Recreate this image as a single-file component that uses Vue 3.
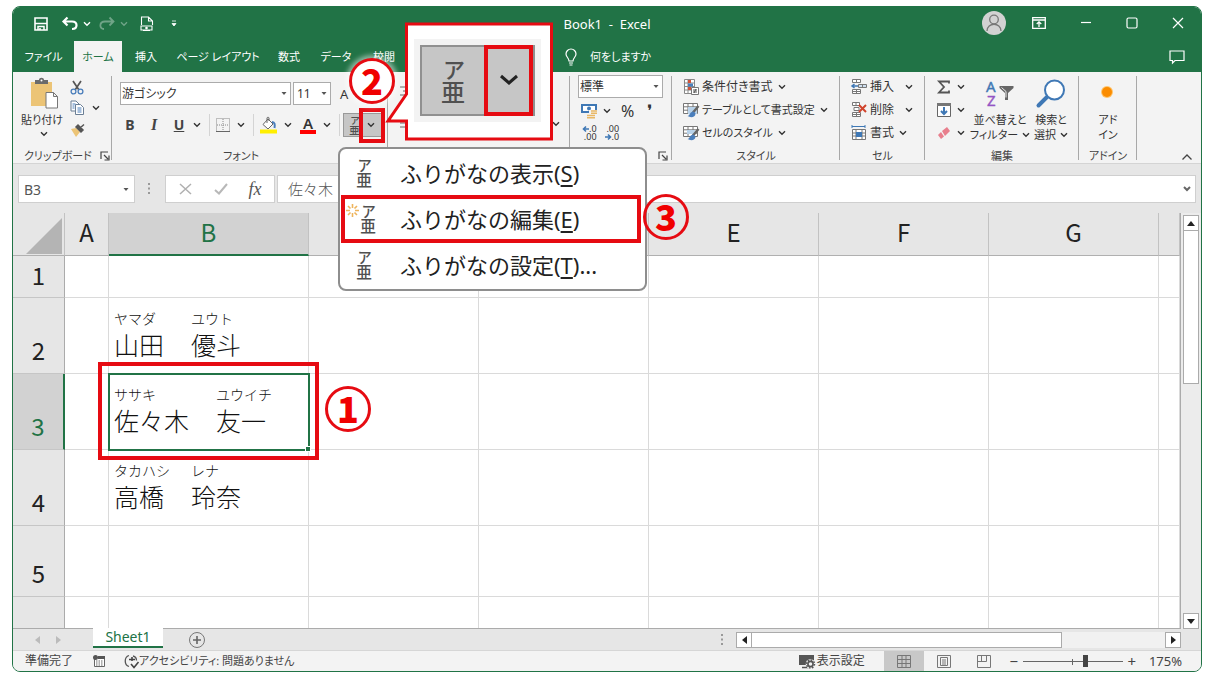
<script setup>
import { h, ref } from 'vue'

const tabs = ['ファイル', 'ホーム', '挿入', 'ページ レイアウト', '数式', 'データ', '校閲']
const columns = ['A', 'B', 'C', 'D', 'E', 'F', 'G', '']
const rows = [
  { n: '1' },
  { n: '2', name: [['ヤマダ', '山田'], ['ユウト', '優斗']] },
  { n: '3', name: [['ササキ', '佐々木'], ['ユウイチ', '友一']] },
  { n: '4', name: [['タカハシ', '高橋'], ['レナ', '玲奈']] },
  { n: '5' },
  { n: '' },
]
const menu = [
  { text: 'ふりがなの表示', key: 'S', tail: '' },
  { text: 'ふりがなの編集', key: 'E', tail: '', spark: true },
  { text: 'ふりがなの設定', key: 'T', tail: '...' },
]
const fontName = ref('游ゴシック')
const fontSize = ref('11')
const format = ref('標準')
const cellRef = ref('B3')
const formula = ref('佐々木　友一')
const zoom = ref(63)

// Phonetic guide icon: a small reading above its base character
const glyph = { 'text-anchor': 'middle', fill: '#505050', 'font-family': "'Noto Sans CJK JP', sans-serif" }
const Furi = (props) =>
  h('svg', { viewBox: '0 0 24 46', 'aria-hidden': 'true', ...props }, [
    h('text', { ...glyph, x: 13, y: 20, 'font-size': 22, 'font-weight': 500 }, 'ア'),
    h('text', { ...glyph, x: 12, y: 43, 'font-size': 24, 'font-weight': 500 }, '亜'),
  ])
</script>

<template>
  <div class="page">
    <svg class="defs" aria-hidden="true">
      <symbol id="chev" viewBox="0 0 8 6"><path d="M1 1.3 4 4.3 7 1.3" fill="none" stroke="currentColor" stroke-width="1.4" /></symbol>
      <symbol id="tri" viewBox="0 0 8 6"><path d="M1.500 1h5L4 4z" fill="#555" /></symbol>
      <symbol id="launch" viewBox="0 0 10 10"><path d="M1 8V1h7M4 4l4 4M9 4.5V9H4.5" fill="none" stroke="currentColor" stroke-width="1.2" /></symbol>
      <symbol id="grid" viewBox="0 0 16 16"><path d="M.5 1.5h14v10H.5zM.5 4.8h14M.5 8.2h14M5 1.5v10M10 1.5v10" fill="#fff" stroke="#777" /></symbol>
    </svg>

    <div class="window">
      <header class="title-bar">
        <div class="quick">
          <button class="q-save" aria-label="上書き保存"><svg width="14" height="14" viewBox="0 0 14 14"><path d="M1 1h12v12H1z" fill="none" stroke="#fff" stroke-width="1.6" /><path d="M1 6.5h12M4 13V9.5h6V13M6 11v2" fill="none" stroke="#fff" stroke-width="1.5" /></svg></button>
          <button class="q-undo" aria-label="元に戻す"><svg width="16" height="14" viewBox="0 0 16 14"><path d="M5.500 .5 1.500 4.500l4 4M2 4.500h8c6 0 6 7.500 0 7.500" fill="none" stroke="#fff" stroke-width="2.200" /></svg></button>
          <button class="q-chev" aria-label="元に戻す一覧"><svg width="8" height="6"><use href="#chev" /></svg></button>
          <button class="q-redo faded" aria-label="やり直し"><svg width="16" height="14" viewBox="0 0 16 14"><path d="m10.500 .5 4 4-4 4M14 4.500H6C0 4.500 0 12 5 12" fill="none" stroke="#fff" stroke-width="1.800" /></svg></button>
          <button class="q-chev faded" aria-label="やり直し一覧"><svg width="8" height="6"><use href="#chev" /></svg></button>
          <button class="q-doc" aria-label="印刷プレビュー"><svg width="14" height="16" viewBox="0 0 14 16"><path d="M1.500 9V1h7l4 4v4M8.500 1v4h4M1 10h11v4H1zM3 14.500h7" fill="none" stroke="#fff" stroke-width="1.100" /><circle cx="6.500" cy="12" r="1.300" fill="#fff" /></svg></button>
          <button class="q-more" aria-label="カスタマイズ"><svg width="8" height="8" viewBox="0 0 8 8"><path d="M2 1h4M2 3.500h4L4 6z" fill="#fff" stroke="#fff" stroke-width=".8" /></svg></button>
        </div>
        <div class="doc-title">Book1&nbsp; -&nbsp; Excel</div>
        <div class="win-controls">
          <button class="avatar" aria-label="アカウント"><svg width="16" height="18" viewBox="0 0 16 18"><circle cx="8" cy="5.500" r="4.300" fill="none" stroke="#777" stroke-width="1.300" /><path d="M1 17c0-9 14-9 14 0" fill="none" stroke="#777" stroke-width="1.300" /></svg></button>
          <button aria-label="リボンの表示"><svg width="14" height="12" viewBox="0 0 14 12"><path d="M.7.7h12.600v10.600H.7zM.7 3h12.600M7 10V5M4.700 7 7 4.800 9.300 7" fill="none" stroke="#fff" stroke-width="1.300" /></svg></button>
          <button aria-label="最小化"><svg width="12" height="12" viewBox="0 0 12 12"><path d="M1 5.500h10" stroke="#fff" stroke-width="1.200" /></svg></button>
          <button aria-label="最大化"><svg width="12" height="12" viewBox="0 0 12 12"><rect x="1" y="1" width="10" height="10" rx="1.500" fill="none" stroke="#fff" stroke-width="1.200" /></svg></button>
          <button aria-label="閉じる"><svg width="12" height="12" viewBox="0 0 12 12"><path d="m1 1 10 10M11 1 1 11" stroke="#fff" stroke-width="1.200" /></svg></button>
        </div>
      </header>

      <nav class="tabs">
        <button v-for="t in tabs" :key="t" class="tab" :class="{ active: t === 'ホーム' }">{{ t }}</button>
        <button class="tell"><svg width="12" height="18" viewBox="0 0 12 18"><path d="M4 13c0-3-3-4-3-7a5 5 0 0 1 10 0c0 3-3 4-3 7zM4 15h4M4.500 17h3" fill="none" stroke="#fff" stroke-width="1.200" /></svg>何をしますか</button>
        <button class="comment" aria-label="コメント"><svg width="16" height="14" viewBox="0 0 16 14"><path d="M1 1h14v9.500H6L3.500 13v-2.500H1z" fill="none" stroke="#fff" stroke-width="1.200" /></svg></button>
      </nav>

      <section class="ribbon">
        <div class="group g-clip">
          <div class="body clip">
            <button class="big paste">
              <svg class="board" width="30" height="32" viewBox="0 0 30 32"><path d="M1 4h21v24H1z" fill="#ecc476" /><path d="M5 2h4c0-3 5-3 5 0h4v4H5z" fill="#6b6b6b" /><circle cx="11.500" cy="2.500" r="1" fill="#fff" /><path d="M16 14.500h7.500l4 4V30H16zM23.500 14.500v4h4" fill="#fff" stroke="#777" /></svg>
              <span class="kana">貼り付け</span>
              <svg class="paste-more" width="8" height="6"><use href="#chev" /></svg>
            </button>
            <div class="clip-side">
              <button aria-label="切り取り"><svg width="14" height="15" viewBox="0 0 14 15"><path d="m3 1 6 9M11 1l-6 9" stroke="#555" stroke-width="1.700" /><circle cx="3.500" cy="11.500" r="2.400" fill="none" stroke="#4a7ebb" stroke-width="1.300" /><circle cx="10.500" cy="11.500" r="2.400" fill="none" stroke="#4a7ebb" stroke-width="1.300" /></svg></button>
              <button aria-label="コピー"><svg width="15" height="15" viewBox="0 0 15 15"><path d="M1 1h5l3 3v7H1z" fill="#fff" stroke="#6b7f95" /><path d="M5.500 4.500h5l3 3v7h-8z" fill="#fff" stroke="#6b7f95" /><path d="M2.500 4h3M2.500 6h2M2.500 8h2M7.500 8h4M7.500 10h4M7.500 12h4" stroke="#4a7ebb" /></svg><svg class="gap7" width="8" height="6"><use href="#chev" /></svg></button>
              <button aria-label="書式のコピー"><svg width="15" height="13" viewBox="0 0 15 13"><path d="M1 5l5-1 4 4-4 5z" fill="#ecc476" /><path d="m6 3 5 5 2-2-5-5zM10 4l4-3.500" fill="#555" stroke="#555" stroke-width="1.500" /></svg></button>
            </div>
          </div>
          <div class="label"><span>クリップボード</span><svg width="10" height="10"><use href="#launch" /></svg></div>
        </div>

        <div class="group g-font">
          <div class="body font-body">
            <div class="row combos">
              <div class="combo font-name"><input v-model="fontName" aria-label="フォント"><button aria-label="フォント一覧"><svg width="8" height="6"><use href="#tri" /></svg></button></div>
              <div class="combo font-size"><input v-model="fontSize" aria-label="フォント サイズ"><button aria-label="サイズ一覧"><svg width="8" height="6"><use href="#tri" /></svg></button></div>
              <button class="grow-font" aria-label="フォント サイズの拡大">A</button>
              <button class="grow-font" aria-label="フォント サイズの縮小">A</button>
            </div>
            <div class="row styles-row">
              <button class="glyph b">B</button>
              <button class="glyph i">I</button>
              <button class="glyph u">U</button>
              <button aria-label="下線の種類" class="c1"><svg width="8" height="6"><use href="#chev" /></svg></button>
              <i class="vsep"></i>
              <button aria-label="罫線" class="c2"><svg width="14" height="14" viewBox="0 0 14 14"><path d="M.5.500h13v13H.5zM7 1v12M1 7h12" fill="none" stroke="#888" stroke-dasharray="1 1" /><path d="M0 13.500h14" stroke="#666" /></svg><svg width="8" height="6"><use href="#chev" /></svg></button>
              <i class="vsep"></i>
              <button aria-label="塗りつぶし" class="c2"><svg width="17" height="17" viewBox="0 0 17 17"><path d="m8 2 5 5-5 5-5-4.500z" fill="#fff" stroke="#666" /><path d="M7 6V1c0-1 2-1 2 0v3" fill="none" stroke="#666" /><path d="M12 5c3 0 3 3 2.500 6" fill="none" stroke="#4a7ebb" stroke-width="2" /><path d="M0 12.500h17v4H0z" fill="#ffef00" /></svg><svg width="8" height="6"><use href="#chev" /></svg></button>
              <button aria-label="フォントの色" class="c2"><span class="fontcolor">A</span><svg width="8" height="6"><use href="#chev" /></svg></button>
              <i class="vsep"></i>
              <button aria-label="ふりがな" class="furi-btn"><Furi width="11" height="20" /><svg width="8" height="6"><use href="#chev" /></svg></button>
            </div>
          </div>
          <div class="label"><span>フォント</span></div>
        </div>

        <div class="group g-align">
          <div class="body align-body">
            <button aria-label="上揃え"><svg width="14" height="12" viewBox="0 0 14 12"><path d="M0 1h14M3 5h8M0 9h14" stroke="#666" /></svg></button>
            <div class="row align-low"><button aria-label="左揃え"><svg width="14" height="12" viewBox="0 0 14 12"><path d="M0 1h14M0 5h9M0 9h14" stroke="#666" /></svg></button><button aria-label="結合"><svg width="8" height="6"><use href="#chev" /></svg></button></div>
          </div>
        </div>

        <div class="group g-num">
          <div class="body num-body">
            <div class="combo"><input v-model="format" aria-label="表示形式"><button aria-label="表示形式一覧"><svg width="8" height="6"><use href="#tri" /></svg></button></div>
            <div class="row num-row">
              <button aria-label="通貨" class="money"><svg width="17" height="15" viewBox="0 0 17 15"><path d="M1 1h14v7H1z" fill="#fff" stroke="#3f78b5" stroke-width="2" /><circle cx="8" cy="4.500" r="2" fill="#3f78b5" /><path d="M8 6h9v9H5v-4h3z" fill="#f3f3f3" /><path d="M10 7h6M10 9.200h6M6 11.500h8M6 13.800h8" stroke="#e9b865" stroke-width="1.600" /></svg><svg width="8" height="6"><use href="#chev" /></svg></button>
              <button class="pct">%</button>
              <button class="comma" aria-label="桁区切り">❜</button>
            </div>
            <div class="row dec-row">
              <button class="dec" aria-label="小数点以下の表示桁数を増やす"><span><svg width="7" height="6" viewBox="0 0 7 6"><path d="M7 3H2M4 .5 1.500 3 4 5.500" fill="none" stroke="#3f78b5" stroke-width="1.600" /></svg>.0</span><span>.00</span></button>
              <button class="dec" aria-label="小数点以下の表示桁数を減らす"><span>.00</span><span><svg width="7" height="6" viewBox="0 0 7 6"><path d="M0 3h5M3 .5 5.500 3 3 5.500" fill="none" stroke="#3f78b5" stroke-width="1.600" /></svg>.0</span></button>
            </div>
          </div>
          <div class="label end"><svg width="10" height="10"><use href="#launch" /></svg></div>
        </div>

        <div class="group g-style">
          <div class="body list">
            <button><svg width="16" height="16" viewBox="0 0 16 16"><path d="M1.500.500h10v14h-10zM1.500 4h10M1.500 7.500h10M1.500 11h10M5 .5v14" fill="#fff" stroke="#888" /><path d="M5 1h3v3H5zM5 8h3v3H5z" fill="#d0533a" /><path d="M5 4.500h5v3H5z" fill="#4a7ebb" /><path d="M8.500 8.500h7v7h-7z" fill="#fff" stroke="#777" /><path d="M10 11h4M10 13h4M13 10l-2 4" stroke="#555" /></svg><span>条件付き書式</span><svg width="8" height="6"><use href="#chev" /></svg></button>
            <button><svg width="16" height="16" viewBox="0 0 16 16"><use href="#grid" width="16" height="16" /><path d="M5 5h9v7H5z" fill="#b9d3ea" /><path d="M15.500 4 10 10.500" stroke="#666" stroke-width="2.400" /><path d="M10.500 9.500c-4 0-3 4-6 4.500 3 2 8 1.500 8-2.500z" fill="#4a7ebb" /></svg><span class="kana">テーブルとして書式設定</span><svg width="8" height="6"><use href="#chev" /></svg></button>
            <button><svg width="16" height="16" viewBox="0 0 16 16"><use href="#grid" width="16" height="16" /><path d="M4 5h8v4H4z" fill="#b9d3ea" /><path d="M15.500 4 10 10.500" stroke="#666" stroke-width="2.400" /><path d="M10.500 9.500c-4 0-3 4-6 4.500 3 2 8 1.500 8-2.500z" fill="#4a7ebb" /></svg><span class="kana">セルのスタイル</span><svg width="8" height="6"><use href="#chev" /></svg></button>
          </div>
          <div class="label"><span>スタイル</span></div>
        </div>

        <div class="group g-cell">
          <div class="body list cells">
            <button class="wide"><svg width="16" height="16" viewBox="0 0 16 16"><path d="M1.500.500h8v3h-8zM5.500.500v3M1.500 10.500h8v4h-8zM5.500 10.500v4M1.500 12.500h8" fill="#fff" stroke="#777" /><path d="M7.500 5.500h8v3h-8zM11.500 5.500v3" fill="#cfe0f0" stroke="#777" /><path d="M7 7H1m2.500-2L1 7l2.500 2" fill="none" stroke="#3f78b5" stroke-width="1.500" /></svg><span>挿入</span><svg width="8" height="6"><use href="#chev" /></svg></button>
            <button class="wide"><svg width="16" height="16" viewBox="0 0 16 16"><path d="M1.500.500h7v3h-7zM5 .5v3M1.500 10.500h8v4h-8zM5.500 10.500v4M1.500 12.500h8M3 5.500h5v3H3z" fill="#fff" stroke="#777" /><path d="m8 3 7 7M15 3l-7 7" stroke="#d0442c" stroke-width="2" /></svg><span>削除</span><svg width="8" height="6"><use href="#chev" /></svg></button>
            <button><svg width="16" height="16" viewBox="0 0 16 16"><path d="M1 1.500h13M1 0v3M14 0v3" stroke="#3f78b5" /><path d="M1.500 4.500h13v10h-13zM1.500 8h13M1.500 11h13M5 4.500v10M11 4.500v10" fill="#fff" stroke="#777" /><path d="M5 7h6v5H5z" fill="#3f78b5" /></svg><span>書式</span><svg width="8" height="6"><use href="#chev" /></svg></button>
          </div>
          <div class="label"><span>セル</span></div>
        </div>

        <div class="group g-edit">
          <div class="body edit-body">
            <div class="list edit-list">
              <button aria-label="合計"><svg width="14" height="14" viewBox="0 0 14 14"><path d="M12 3.500V1.500H2l5 5.500-5 5.500h10v-2" fill="none" stroke="#555" stroke-width="1.800" /></svg><svg width="8" height="6"><use href="#chev" /></svg></button>
              <button aria-label="フィル"><svg width="14" height="14" viewBox="0 0 14 14"><path d="M.5.500h13v13H.5z" fill="#fff" stroke="#666" /><path d="M0 1.500h14" stroke="#777" stroke-width="3" /><path d="M7 4v7M4 8l3 3 3-3" fill="none" stroke="#3f78b5" stroke-width="2" /></svg><svg width="8" height="6"><use href="#chev" /></svg></button>
              <button aria-label="クリア"><svg width="14" height="14" viewBox="0 0 14 14"><path d="m5 5 5-4 3 4-5 5z" fill="#e87f8d" /><path d="m4 6-3 3 3 4 3-2.500z" fill="#e87f8d" /></svg><svg width="8" height="6"><use href="#chev" /></svg></button>
            </div>
            <button class="big sort">
              <svg width="30" height="30" viewBox="0 0 30 30"><text x="1" y="13" font-size="15" fill="#3f78b5" stroke="#3f78b5" stroke-width=".4" font-family="'Noto Sans', sans-serif">A</text><text x="2" y="27" font-size="15" fill="#9455c4" stroke="#9455c4" stroke-width=".4" font-family="'Noto Sans', sans-serif">Z</text><path d="M14.500 7h14v2L23 14v7h-3v-7l-5.500-5z" fill="#666" /><path d="m16.500 8.500 4.500 4v6" fill="none" stroke="#eee" /></svg>
              <span>並べ替えと</span><span>フィルター <svg width="8" height="6"><use href="#chev" /></svg></span>
            </button>
            <button class="big find">
              <svg width="30" height="30" viewBox="0 0 30 30"><path d="m11 18-8.500 8.500" stroke="#3f78b5" stroke-width="4" stroke-linecap="round" /><circle cx="18.500" cy="11" r="9.500" fill="#fff" stroke="#3f78b5" stroke-width="2" /></svg>
              <span>検索と</span><span>選択 <svg width="8" height="6"><use href="#chev" /></svg></span>
            </button>
          </div>
          <div class="label"><span>編集</span></div>
        </div>

        <div class="group g-add">
          <div class="body">
            <button class="big add">
              <svg width="30" height="30" viewBox="0 0 30 30"><circle cx="14" cy="13" r="6" fill="#ffc46b" /><circle cx="14" cy="13" r="5" fill="#fb8c00" /></svg>
              <span>アド</span><span>イン</span>
            </button>
          </div>
          <div class="label"><span>アドイン</span></div>
        </div>
        <button class="collapse" aria-label="リボンを折りたたむ"><svg width="12" height="8" viewBox="0 0 12 8"><path d="m1.500 6.500 4.500-4.500 4.500 4.500" fill="none" stroke="#444" stroke-width="1.300" /></svg></button>
      </section>

      <section class="formula-bar">
        <div class="combo name-box"><input v-model="cellRef" aria-label="名前ボックス"><button aria-label="名前一覧"><svg width="8" height="6"><use href="#tri" /></svg></button></div>
        <svg class="dots" width="3" height="12" viewBox="0 0 3 12"><path d="M0 0h2v2H0zM0 4.500h2v2H0zM0 9h2v2H0z" fill="#999" /></svg>
        <div class="fx-box">
          <button aria-label="キャンセル"><svg width="14" height="12" viewBox="0 0 14 12"><path d="m1 1 11 10M12 1 1 11" stroke="#b0b0b0" stroke-width="1.500" /></svg></button>
          <button aria-label="入力"><svg width="14" height="12" viewBox="0 0 14 12"><path d="m1 7 4 3.500L13 1" fill="none" stroke="#b8b8b8" stroke-width="2" /></svg></button>
          <button class="fx"><i>fx</i></button>
        </div>
        <div class="formula"><input v-model="formula" aria-label="数式バー"><button aria-label="数式バーの展開"><svg width="8" height="6" viewBox="0 0 8 6"><path d="m1 1 3 3 3-3" fill="none" stroke="#666" stroke-width="2" /></svg></button></div>
      </section>

      <main class="sheet">
        <div class="table-wrap">
          <table>
            <colgroup><col class="w-head"><col class="w-a"><col class="w-b"><col v-for="k in 5" :key="k" class="w-c"><col></colgroup>
            <thead>
              <tr>
                <th class="corner"><svg width="36" height="36" viewBox="0 0 36 36"><path d="M36 0v36H0z" fill="#b4b4b4" /></svg></th>
                <th v-for="c in columns" :key="c" :class="{ sel: c === 'B' }">{{ c }}</th>
              </tr>
            </thead>
            <tbody>
              <tr v-for="r in rows" :key="r.n" :class="'r' + r.n">
                <th :class="{ sel: r.n === '3' }">{{ r.n }}</th>
                <td v-for="c in columns" :key="c" :class="{ current: r.n === '3' && c === 'B' }">
                  <div v-if="c === 'B' && r.name" class="name">
                    <span v-for="p in r.name" :key="p[1]" class="part"><small>{{ p[0] }}</small><span>{{ p[1] }}</span></span>
                  </div>
                  <i v-if="r.n === '3' && c === 'B'" class="handle"></i>
                </td>
              </tr>
            </tbody>
          </table>
        </div>
        <div class="vscroll">
          <button aria-label="上へ"><svg width="8" height="5" viewBox="0 0 8 5"><path d="M4 0l4 5H0z" fill="#222" /></svg></button>
          <div class="vthumb"></div>
          <button class="down" aria-label="下へ"><svg width="8" height="5" viewBox="0 0 8 5"><path d="M4 5l4-5H0z" fill="#222" /></svg></button>
        </div>
      </main>

      <section class="sheet-bar">
        <div class="sheet-nav">
          <button aria-label="前のシート"><svg width="5" height="8" viewBox="0 0 5 8"><path d="M5 0v8L0 4z" fill="#bbb" /></svg></button>
          <button aria-label="次のシート"><svg width="5" height="8" viewBox="0 0 5 8"><path d="M0 0v8l5-4z" fill="#bbb" /></svg></button>
        </div>
        <button class="sheet-tab">Sheet1</button>
        <button class="add-sheet" aria-label="新しいシート"><svg width="18" height="18" viewBox="0 0 18 18"><circle cx="9" cy="9" r="7.500" fill="none" stroke="#777" /><path d="M9 5v8M5 9h8" stroke="#666" stroke-width="1.600" /></svg></button>
        <svg class="bar-dots" width="3" height="12" viewBox="0 0 3 12"><path d="M0 0h2v2H0zM0 4.500h2v2H0zM0 9h2v2H0z" fill="#999" /></svg>
        <div class="hscroll">
          <button aria-label="左へ"><svg width="5" height="8" viewBox="0 0 5 8"><path d="M5 0v8L0 4z" fill="#222" /></svg></button>
          <div class="hthumb"></div>
          <button class="right" aria-label="右へ"><svg width="5" height="8" viewBox="0 0 5 8"><path d="M0 0v8l5-4z" fill="#222" /></svg></button>
        </div>
      </section>

      <footer class="status">
        <span class="ready">準備完了</span>
        <svg class="macro" width="13" height="12" viewBox="0 0 13 12"><path d="M1.500 2.500h10v9h-10z" fill="#fff" stroke="#666" /><path d="M5 2.500h7" stroke="#555" stroke-width="3" /><circle cx="2.500" cy="2.500" r="2.500" fill="#555" /><path d="M3 6h7M3 8h7M3 10h7" stroke="#666" stroke-dasharray="1.500 1" /></svg>
        <svg class="acc" width="15" height="15" viewBox="0 0 15 15"><path d="M5 1.500C0 3 0 11 5 12.500M9 2c2 .5 3.500 2 3.500 4.500" fill="none" stroke="#555" stroke-width="1.300" /><path d="M5 5.500h6M8 3v4M7 10l3 3.500 4.500-5.500" fill="none" stroke="#444" stroke-width="1.600" /></svg>
        <span class="kana">アクセシビリティ: 問題ありません</span>
        <button class="display"><svg width="17" height="15" viewBox="0 0 17 15"><path d="M0 1h15v10H0z" fill="#555" /><path d="M3 13.500h6" stroke="#555" stroke-width="1.500" /><circle cx="11.500" cy="10" r="4.800" fill="#f2f2f2" /><circle cx="11.500" cy="10" r="2.600" fill="none" stroke="#555" stroke-width="1.600" /><circle cx="11.500" cy="10" r="4" fill="none" stroke="#555" stroke-width="1.500" stroke-dasharray="1.600 1.500" /></svg>表示設定</button>
        <button class="view on" aria-label="標準"><svg width="14" height="13" viewBox="0 0 14 13"><path d="M.5.500h13v12H.5zM.5 4.500h13M.5 8.500h13M5 .5v12M9 .5v12" fill="none" stroke="#777" /></svg></button>
        <button class="view" aria-label="ページ レイアウト"><svg width="14" height="13" viewBox="0 0 14 13"><path d="M.5.500h13v12H.5zM3.500 2.500h7v8h-7zM5 5h4M5 7h4M5 9h4" fill="none" stroke="#777" /></svg></button>
        <button class="view" aria-label="改ページ プレビュー"><svg width="14" height="13" viewBox="0 0 14 13"><path d="M.5.500h13v12H.5zM4.500.500v6M9.500.500v6M.5 6.500h9" fill="none" stroke="#777" /></svg></button>
        <div class="zoom">
          <button aria-label="縮小">−</button>
          <input v-model="zoom" type="range" min="0" max="100" aria-label="ズーム">
          <button aria-label="拡大">+</button>
          <span class="pct-text">175%</span>
        </div>
      </footer>

      <div class="mark-small"></div>
      <div class="badge two">2</div>
      <div class="callout">
        <svg class="balloon" width="170" height="121" viewBox="0 0 170 121"><path d="M22.500 2h145v115h-145v-18H4l18.500-27z" fill="#fff" stroke="#e60b12" stroke-width="3" /></svg>
        <div class="zoomed"><Furi width="24" height="46" /><span class="zoomed-arrow"><svg width="20" height="13" viewBox="0 0 20 13"><path d="m2 2 8 7 8-7" fill="none" stroke="#222" stroke-width="3" /></svg></span></div>
      </div>
      <ul class="menu">
        <li v-for="m in menu" :key="m.key">
          <button :class="{ target: m.spark }">
            <span class="ico"><svg v-if="m.spark" class="spark" width="13" height="13" viewBox="0 0 13 13"><path d="M6.500 0v4M6.500 9v4M0 6.500h4M9 6.500h4M2 2l2.500 2.500M11 2 8.500 4.500M2 11l2.500-2.500M11 11 8.500 8.500" stroke="#eeb45c" stroke-width="1.600" /></svg><Furi width="16" height="30" /></span>
            <span>{{ m.text }}(<u>{{ m.key }}</u>){{ m.tail }}</span>
          </button>
        </li>
      </ul>
      <div class="mark-cell"></div>
      <div class="badge one">1</div>
      <div class="badge three">3</div>
    </div>
  </div>
</template>

<style>
body { margin: 0; background: #fff; }
</style>

<style scoped>
* { box-sizing: border-box; }
.page { height: 100vh; padding: 6px 10px 9px 12px; font-family: "Noto Sans", "Noto Sans CJK JP", sans-serif; font-size: 12px; line-height: 16px; color: #333; font-feature-settings: "palt"; }
.defs { position: absolute; width: 0; height: 0; }
svg { display: block; flex: none; overflow: visible; }
button { font: inherit; font-feature-settings: inherit; color: inherit; background: none; border: 0; padding: 0; display: flex; align-items: center; white-space: nowrap; }
input { font: inherit; font-feature-settings: inherit; color: inherit; border: 0; background: none; padding: 0; margin: 0; min-width: 0; outline: 0; }
.kana { font-size: 11px; }
.window { position: relative; height: 100%; display: flex; flex-direction: column; border: 1px solid #217346; border-radius: 8px; background: #e6e6e6; }

.title-bar { background: #217346; color: #fff; height: 34px; flex: none; display: grid; grid-template-columns: 1fr auto 1fr; align-items: center; border-radius: 7px 7px 0 0; }
.quick { display: flex; align-items: center; padding-left: 21px; }
.q-undo { margin-left: 14px; }
.q-chev { margin-left: 5px; }
.q-redo { margin-left: 8px; }
.q-doc { margin-left: 12px; }
.q-more { margin-left: 16px; }
.faded { opacity: .35; }
.doc-title { font-size: 13px; }
.win-controls { display: flex; justify-content: flex-end; align-items: center; gap: 34px; padding: 0 17px 3px 0; }
.avatar { width: 24px; height: 24px; border-radius: 50%; background: #d2d2d2; justify-content: center; margin-right: -8px; }

.tabs { background: #217346; color: #fff; height: 31px; flex: none; display: grid; grid-template-columns: 61px 48px 48px 96px 46px 48px 48px 157px 1fr; }
.tab { justify-content: center; font-size: 11px; }
.tab.active { background: #f3f3f3; color: #217346; }
.tell { grid-column: 9; gap: 13px; justify-self: start; font-size: 11px; }
.comment { grid-column: 10; margin-right: 16px; }

.ribbon { display: flex; height: 92px; flex: none; background: #f3f3f3; border-bottom: 1px solid #d4d4d4; }
.group { display: flex; flex-direction: column; flex: none; position: relative; }
.group::after { content: ""; position: absolute; right: 0; top: 4px; bottom: 3px; width: 1px; background: #a8a8a8; }
.body { flex: 1; min-height: 0; }
.label { height: 16px; display: flex; justify-content: center; align-items: center; font-size: 11px; color: #444; margin-bottom: -1px; }
.label.end { justify-content: flex-end; padding-right: 4px; }
.row { display: flex; align-items: center; }
.g-clip { width: 99px; }
.g-font { width: 276px; }
.g-font .label { padding-right: 18px; }
.g-align { width: 182px; }
.g-num { width: 102px; }
.g-style { width: 168px; }
.g-cell { width: 85px; }
.g-edit { width: 154px; }
.g-add { width: 58px; }
.g-clip .label { justify-content: space-between; padding: 0 2px 0 11px; }

.big { flex-direction: column; line-height: 15px; font-size: 11px; }
.big > span { display: flex; align-items: center; gap: 4px; height: 15px; }
.clip { display: flex; padding-top: 6px; }
.paste { width: 56px; margin-left: 1px; align-self: flex-start; }
.paste > span { height: 18px; }
.board { margin-left: 6px; }
.paste-more { margin: 3px 0 0 4px; }
.clip-side { display: flex; flex-direction: column; }
.clip-side button { height: 23px; }
.clip-side button:first-child { height: 18px; }
.gap7 { margin-left: 7px; }

.combo { display: flex; align-items: center; justify-content: space-between; background: #fff; border: 1px solid #ababab; height: 23px; padding: 0 2px 0 1px; }
.combo input { flex: 1; width: 20px; }
.font-body { padding: 10px 0 0 8px; }
.combos { gap: 2px; }
.font-name { width: 171px; }
.font-size { width: 38px; padding-left: 3px; }
.grow-font { margin-left: 7px; width: 14px; font-size: 13px; }
.styles-row { margin-top: 8px; height: 24px; }
.glyph { justify-content: center; width: 24px; font-size: 14px; font-weight: 700; color: #444; }
.b { width: 20px; }
.i { width: 28px; font-size: 16px; font-style: italic; font-family: "Liberation Serif", serif; }
.u { width: 22px; text-decoration: underline; }
.c1 { margin-left: 3px; }
.c2 { gap: 7px; margin-left: 8px; }
.vsep { width: 1px; height: 22px; background: #d4d4d4; margin-left: 8px; }
.vsep + .c2 { margin-left: 6px; }
.fontcolor { width: 16px; height: 17px; border-bottom: 4px solid #f00; font-weight: 600; font-size: 15px; line-height: 13px; }
.furi-btn { width: 41px; height: 24px; background: #c6c6c6; border: 1px solid #999; padding: 0 8px 0 5px; justify-content: space-between; margin-left: 3px; }

.align-body { padding: 14px 10px 0 12px; }
.align-low { justify-content: space-between; margin-top: 20px; }
.num-body { padding: 3px 9px 0 8px; }
.num-row { margin-top: 2px; height: 22px; padding-left: 3px; }
.money { gap: 5px; width: 35px; }
.pct { font-size: 16px; margin-left: 5px; }
.comma { font-size: 17px; margin-left: 13px; }
.dec-row { gap: 8px; height: 22px; padding-left: 4px; }
.dec { flex-direction: column; align-items: flex-end; font-size: 9px; line-height: 8px; }
.dec span { display: flex; align-items: center; }

.list { display: flex; flex-direction: column; padding-top: 3px; }
.list button { height: 23px; gap: 5px; }
.list button > svg:first-child { margin-right: -2px; }
.g-style .list { padding-left: 11px; }
.cells { padding-left: 11px; }
.cells .wide { gap: 11px; }
.cells .wide > svg:first-child { margin-right: -8px; }
.edit-body { display: flex; }
.edit-list { padding-left: 12px; width: 48px; }
.edit-list button { gap: 8px; }
.big.sort { width: 54px; align-self: flex-start; padding-top: 7px; }
.big.find { width: 48px; align-self: flex-start; padding-top: 7px; }
.big.sort > svg, .big.find > svg, .big.add > svg { margin-bottom: 3px; }
.big.add { width: 100%; padding-top: 7px; }
.collapse { margin: auto 8px 0 auto; height: 12px; }

.formula-bar { height: 49px; flex: none; display: flex; align-items: flex-start; padding: 11px 5px 0; font-size: 14px; color: #555; }
.name-box { width: 117px; height: 28px; border-color: #cfcfcf; padding: 2px 4px 0 5px; }
.dots { margin: 8px 14px 0 13px; }
.fx-box { width: 110px; height: 28px; background: #fff; border: 1px solid #cfcfcf; display: flex; justify-content: space-around; padding: 0 2px; }
.fx { font-family: "Liberation Serif", serif; font-size: 18px; }
.formula { flex: 1; display: flex; margin-left: 2px; height: 28px; background: #fff; border: 1px solid #cfcfcf; padding: 0 4px 0 10px; font-family: "Noto Sans CJK JP", sans-serif; font-size: 15px; font-weight: 300; font-feature-settings: normal; }
.formula input { flex: 1; }

.sheet { flex: 1; min-height: 0; display: flex; }
.table-wrap { flex: 1; overflow: hidden; border-right: 1px solid #ababab; border-bottom: 1px solid #ababab; }
table { width: 100%; table-layout: fixed; border-spacing: 0; font-family: "Noto Sans CJK JP", sans-serif; font-weight: 300; font-feature-settings: normal; }
.w-head { width: 52px; }
.w-a { width: 44px; }
.w-b { width: 200px; }
.w-c { width: 170px; }
th { font-weight: 400; font-size: 24px; line-height: 30px; color: #222; padding: 0 0 4px; background: #e6e6e6; border-right: 1px solid #b8b8b8; border-bottom: 1px solid #b0b0b0; }
thead th { height: 43px; border-right-color: #c2c2c2; }
thead .corner { padding: 0; }
tbody th { vertical-align: bottom; border-bottom-color: #c6c6c6; border-right-color: #ababab; }
th.sel { background: #d2d2d2; color: #217346; border-bottom: 2px solid #217346; }
tbody th.sel { border-bottom: 1px solid #c6c6c6; border-right: 2px solid #217346; }
.corner svg { margin: 3px 0 0 13px; }
td { background: #fff; padding: 0; border-right: 1px solid #dadada; border-bottom: 1px solid #dadada; vertical-align: bottom; }
tbody tr { height: 76px; }
tbody .r1 { height: 42px; }
.r1 th { padding-bottom: 7px; }
tbody .r5 { height: 71px; }
.r5 th, .r2 th, .r3 th, .r4 th { padding-bottom: 8px; }
td.current { position: relative; outline: 2px solid #217346; outline-offset: -1px; }
.handle { position: absolute; right: -3px; bottom: -3px; width: 6px; height: 6px; background: #217346; border: 1px solid #fff; }
.name { display: flex; gap: 27px; padding: 0 0 12px 5px; color: #111; }
.part { display: flex; flex-direction: column; font-size: 25px; line-height: 34px; }
.part small { width: 0; white-space: nowrap; font-size: 14px; line-height: 18px; }

.vscroll { width: 20px; padding: 2px 2px 0; display: flex; flex-direction: column; background: #ececec; }
.vscroll button, .hscroll button { width: 16px; height: 16px; background: #fff; border: 1px solid #ababab; justify-content: center; flex: none; }
.vthumb { height: 153px; background: #fff; border: 1px solid #ababab; border-top: 0; }
.down { margin-top: auto; }

.sheet-bar { height: 21px; flex: none; display: flex; align-items: center; }
.sheet-nav { width: 80px; display: flex; gap: 16px; padding-left: 22px; }
.sheet-tab { width: 70px; height: 20px; align-self: flex-start; margin-top: -1px; background: #fff; color: #217346; border-bottom: 2px solid #217346; justify-content: center; font-size: 14px; }
.add-sheet { margin-left: 25px; }
.bar-dots { margin-left: auto; }
.hscroll { width: 445px; margin: 0 20px 0 12px; display: flex; background: #f1f1f1; }
.hthumb { width: 310px; height: 16px; background: #fff; border: 1px solid #ababab; border-left: 0; }
.right { margin-left: auto; }

.status { height: 21px; flex: none; display: flex; align-items: center; padding: 0 19px 0 12px; background: #f3f3f3; border-top: 1px solid #d6d6d6; border-radius: 0 0 7px 7px; color: #444; }
.macro { margin-left: 20px; }
.acc { margin-left: 18px; }
.display { margin: 0 19px 0 auto; gap: 1px; }
.view { width: 40px; height: 20px; justify-content: center; }
.view.on { background: #c8c8c8; }
.zoom { display: flex; align-items: center; margin-left: 4px; }
.zoom button { width: 12px; justify-content: center; font-size: 15px; }
.zoom input { appearance: none; width: 100px; height: 12px; margin: 0 3px; background: linear-gradient(#666, #666) 0 6px / 100% 1px no-repeat, linear-gradient(#666, #666) 50% 4px / 1px 6px no-repeat; }
.zoom input::-webkit-slider-thumb { appearance: none; width: 5px; height: 12px; background: #444; }
.pct-text { margin-left: 11px; font-size: 13px; }

.mark-small { position: absolute; left: 346px; top: 101px; width: 26px; height: 35px; border: 4px solid #e60b12; }
.badge { position: absolute; width: 46px; height: 46px; padding-bottom: 3px; border: 3px solid #e60b12; border-radius: 50%; background: #fff; color: #f00000; display: flex; align-items: center; justify-content: center; font: 900 36px/37px "Noto Sans CJK JP", sans-serif; }
.two { left: 336px; top: 51px; box-shadow: 0 0 5px 3px rgba(255, 255, 255, .5); }
.one { left: 312px; top: 379px; }
.three { left: 630px; top: 187px; }
.three.badge { background: transparent; }
.callout { position: absolute; left: 371px; top: 15px; width: 170px; height: 121px; }
.balloon { position: absolute; inset: 0; }
.zoomed { position: absolute; left: 36px; top: 23px; width: 115px; height: 71px; background: #c6c6c6; border: 2px solid #909090; outline: 6px solid #f3f3f3; display: flex; align-items: center; justify-content: space-between; padding-left: 19px; }
.zoomed-arrow { width: 49px; height: 71px; border: 4px solid #e60b12; display: flex; align-items: center; justify-content: center; }
.menu { position: absolute; left: 325px; top: 140px; width: 309px; margin: 0; padding: 1px; list-style: none; background: #fff; border: 2px solid #8e8e8e; border-radius: 8px; font: 22px/30px "Noto Sans", "Noto Sans CJK JP", sans-serif; color: #222; }
.menu li { height: 46px; display: flex; }
.menu button { width: 300px; gap: 28px; padding-left: 11px; border: 4px solid transparent; margin: -1px 0; }
.menu .target { border-color: #e60b12; padding-left: 15px; gap: 24px; }
.menu u { text-underline-offset: 3px; text-decoration-thickness: 2px; }
.ico { position: relative; width: 16px; }
.spark { position: absolute; left: -14px; top: 0; }
.mark-cell { position: absolute; left: 85px; top: 355px; width: 221px; height: 98px; border: 4px solid #e60b12; }
</style>
